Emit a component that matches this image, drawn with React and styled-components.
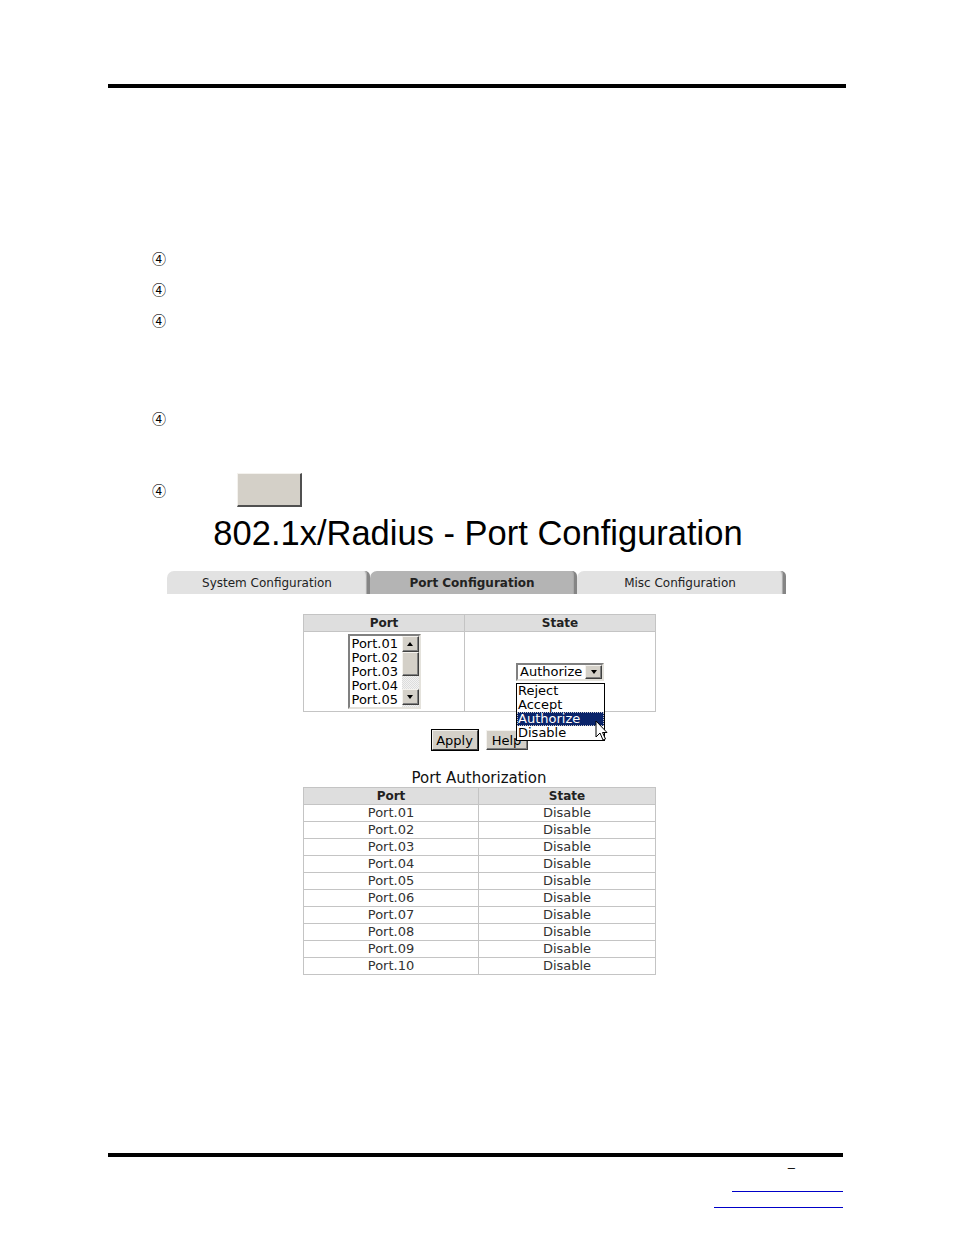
import React from 'react';
import styled, { createGlobalStyle } from 'styled-components';

const GlobalStyle = createGlobalStyle`
    body {
        margin: 0;
        background: #fff;
    }
`;

const Page = styled.div`
    width: 954px;
    height: 1235px;
    overflow: hidden;
    font-family: "DejaVu Sans", Verdana, sans-serif;
    color: #000;
`;

const Rule = styled.div`
    margin-top: ${p => p.$top}px;
    margin-left: 108px;
    width: ${p => p.$width}px;
    height: ${p => p.$thick}px;
    background: #000;
`;

const Steps = styled.div`
    display: flex;
    flex-direction: column;
    padding-left: 152px;
`;

const Step = styled.div`
    display: flex;
    align-items: center;
    min-height: 20px;
    margin-top: ${p => p.$top}px;
`;

const Mark = styled.span`
    width: 85px;
    font-family: "Noto Sans CJK JP", "DejaVu Sans", sans-serif;
    font-size: 14px;
    line-height: 20px;
`;

const BlankButton = styled.div`
    width: 65px;
    height: 34px;
    box-sizing: border-box;
    background: #d4d0c8;
    border-top: 1px solid #f4f2ee;
    border-left: 1px solid #f4f2ee;
    border-right: 2px solid #505050;
    border-bottom: 2px solid #505050;
`;

const Figure = styled.div`
    margin-left: 168px;
    width: 620px;
`;

const Title = styled.h1`
    margin: 7px 0 0;
    text-align: center;
    font-family: "Liberation Sans", Arial, sans-serif;
    font-size: 34.5px;
    font-weight: normal;
    line-height: 38px;
`;

const TabBar = styled.div`
    display: flex;
    margin-top: 19px;
    margin-left: -1px;
`;

const Tab = styled.div`
    width: ${p => p.$w}px;
    height: 23px;
    box-sizing: border-box;
    display: flex;
    align-items: center;
    justify-content: center;
    background: ${p => (p.$active ? '#b4b4b4' : '#e2e2e2')};
    border-top-left-radius: 7px;
    border-top-right-radius: 5px;
    border-right: 3px solid #858585;
    box-shadow: inset -2px 0 1px -1px #a8a8a8;
    font-size: 12px;
    font-weight: ${p => (p.$active ? 'bold' : 'normal')};
    color: #222;
`;

const Grid = styled.table`
    margin-top: ${p => p.$top}px;
    margin-left: 303px;
    width: 352px;
    border-collapse: collapse;
    table-layout: fixed;
    font-size: 13px;
    color: #333;

    th, td {
        border: 1px solid #c4c4c4;
        padding: 0;
        text-align: center;
    }

    th {
        background: #dedede;
        height: 16px;
        font-size: 12px;
        font-weight: bold;
        color: #222;
        line-height: 15px;
    }

    td {
        height: 16px;
        line-height: 16px;
    }
`;

const FormCell = styled.td`
    && {
        height: 79px;
        vertical-align: middle;
    }
`;

const ListBox = styled.div`
    display: inline-flex;
    vertical-align: middle;
    width: 73px;
    height: 75px;
    box-sizing: border-box;
    border: 2px solid;
    border-color: #808080 #e4e2dc #e4e2dc #808080;
    background: #fff;
    text-align: left;
    color: #000;
`;

const Options = styled.div`
    flex: 1;
    padding: 1px 0 0 2px;
    font-size: 13px;
    line-height: 14px;
    overflow: hidden;
`;

const ScrollBar = styled.div`
    width: 17px;
    display: flex;
    flex-direction: column;
    background: repeating-conic-gradient(#f2f2f2 0 25%, #dcdcdc 0 50%) 0 0 / 2px 2px;
`;

const Raised = styled.div`
    height: ${p => p.$h}px;
    box-sizing: border-box;
    display: flex;
    align-items: center;
    justify-content: center;
    background: #d4d0c8;
    border: 1px solid;
    border-color: #f4f2ee #404040 #404040 #f4f2ee;
    box-shadow: inset -1px -1px 0 #808080;
    margin-top: ${p => p.$push || 0}px;
`;

const Arrow = styled.span`
    width: 0;
    height: 0;
    border-left: 3px solid transparent;
    border-right: 3px solid transparent;
    ${p => (p.$up ? 'border-bottom: 4px solid #000;' : 'border-top: 4px solid #000;')}
`;

const SelectWrap = styled.div`
    position: relative;
    display: inline-block;
    vertical-align: middle;
    text-align: left;
    color: #000;
`;

const SelectBox = styled.div`
    display: flex;
    align-items: center;
    width: 88px;
    height: 18px;
    box-sizing: border-box;
    border: 2px solid;
    border-color: #808080 #e4e2dc #e4e2dc #808080;
    background: #fff;
    font-size: 13px;
    line-height: 14px;
`;

const SelectText = styled.span`
    flex: 1;
    padding-left: 2px;
`;

const SelectButton = styled(Raised)`
    width: 17px;
    height: 14px;
`;

const DropList = styled.div`
    position: absolute;
    top: 20px;
    left: 0;
    width: 89px;
    box-sizing: border-box;
    border: 1px solid #000;
    background: #fff;
    font-size: 13px;
    line-height: 14px;
    z-index: 2;
`;

const DropItem = styled.div`
    padding-left: 1px;
    height: 14px;
    background: ${p => (p.$selected ? '#0a246a' : 'transparent')};
    color: ${p => (p.$selected ? '#fff' : '#000')};
    outline: ${p => (p.$selected ? '1px dotted #c8c8c8' : 'none')};
    outline-offset: -1px;
`;

const Pointer = styled.svg`
    position: absolute;
    left: 78px;
    top: 36px;
`;

const ButtonRow = styled.div`
    display: flex;
    justify-content: center;
    gap: 7px;
    margin: 18px 0 0 303px;
    width: 352px;
`;

const FormButton = styled.button`
    width: ${p => p.$w}px;
    height: 20px;
    padding: 0;
    margin: ${p => (p.$default ? '0 1px' : '0')};
    box-sizing: border-box;
    background: #d4d0c8;
    border: 1px solid;
    border-color: #f4f2ee #404040 #404040 #f4f2ee;
    box-shadow: ${p => (p.$default ? '0 0 0 1px #000' : 'inset -1px -1px 0 #808080')};
    font-family: "DejaVu Sans", Verdana, sans-serif;
    font-size: 13px;
    color: #000;
`;

const Caption = styled.div`
    margin: 19px 0 0 303px;
    width: 352px;
    text-align: center;
    font-size: 15px;
    line-height: 18px;
    color: #111;
`;

const FooterNotes = styled.div`
    display: flex;
    flex-direction: column;
    align-items: flex-end;
    width: 843px;
`;

const Dash = styled.span`
    margin: 4px 48px 0 0;
    font-family: "Liberation Sans", Arial, sans-serif;
    font-size: 13px;
    line-height: 14px;
`;

const LinkLine = styled.div`
    width: ${p => p.$w}px;
    height: 1px;
    margin-top: ${p => p.$top}px;
    border-bottom: 1px solid #0000c8;
`;

const listPorts = ['Port.01', 'Port.02', 'Port.03', 'Port.04', 'Port.05'];
const states = ['Reject', 'Accept', 'Authorize', 'Disable'];
const authRows = ['01', '02', '03', '04', '05', '06', '07', '08', '09', '10'];

export default function App() {
    return (
        <Page>
            <GlobalStyle />
            <Rule $top={84} $width={738} $thick={4} />

            <Steps>
                <Step $top={160}><Mark>④</Mark></Step>
                <Step $top={11}><Mark>④</Mark></Step>
                <Step $top={11}><Mark>④</Mark></Step>
                <Step $top={78}><Mark>④</Mark></Step>
                <Step $top={45}><Mark>④</Mark><BlankButton /></Step>
            </Steps>

            <Figure>
                <Title>802.1x/Radius - Port Configuration</Title>
                <TabBar>
                    <Tab $w={203}>System Configuration</Tab>
                    <Tab $w={207} $active>Port Configuration</Tab>
                    <Tab $w={209}>Misc Configuration</Tab>
                </TabBar>
            </Figure>

            <Grid $top={20}>
                <colgroup>
                    <col style={{ width: 161 }} />
                    <col style={{ width: 191 }} />
                </colgroup>
                <thead>
                    <tr><th>Port</th><th>State</th></tr>
                </thead>
                <tbody>
                    <tr>
                        <FormCell>
                            <ListBox>
                                <Options>
                                    {listPorts.map(p => <div key={p}>{p}</div>)}
                                </Options>
                                <ScrollBar>
                                    <Raised $h={16}><Arrow $up /></Raised>
                                    <Raised $h={24} />
                                    <Raised $h={16} $push={13}><Arrow /></Raised>
                                </ScrollBar>
                            </ListBox>
                        </FormCell>
                        <FormCell>
                            <SelectWrap>
                                <SelectBox>
                                    <SelectText>Authorize</SelectText>
                                    <SelectButton><Arrow /></SelectButton>
                                </SelectBox>
                                <DropList>
                                    {states.map(s => (
                                        <DropItem key={s} $selected={s === 'Authorize'}>{s}</DropItem>
                                    ))}
                                    <Pointer width="13" height="22" viewBox="0 0 13 22">
                                        <polygon
                                            points="1,1 1,17 5,13 8,20 10.5,19 7.5,12.5 12,12.5"
                                            fill="#fff"
                                            stroke="#000"
                                            strokeWidth="1"
                                            strokeLinejoin="miter"
                                        />
                                    </Pointer>
                                </DropList>
                            </SelectWrap>
                        </FormCell>
                    </tr>
                </tbody>
            </Grid>

            <ButtonRow>
                <FormButton $w={46} $default>Apply</FormButton>
                <FormButton $w={42}>Help</FormButton>
            </ButtonRow>

            <Caption>Port Authorization</Caption>
            <Grid $top={0}>
                <colgroup>
                    <col style={{ width: 175 }} />
                    <col style={{ width: 177 }} />
                </colgroup>
                <thead>
                    <tr><th>Port</th><th>State</th></tr>
                </thead>
                <tbody>
                    {authRows.map(n => (
                        <tr key={n}>
                            <td>Port.{n}</td>
                            <td>Disable</td>
                        </tr>
                    ))}
                </tbody>
            </Grid>

            <Rule $top={178} $width={735} $thick={4} />
            <FooterNotes>
                <Dash>–</Dash>
                <LinkLine $w={111} $top={15} />
                <LinkLine $w={129} $top={14} />
            </FooterNotes>
        </Page>
    );
}
